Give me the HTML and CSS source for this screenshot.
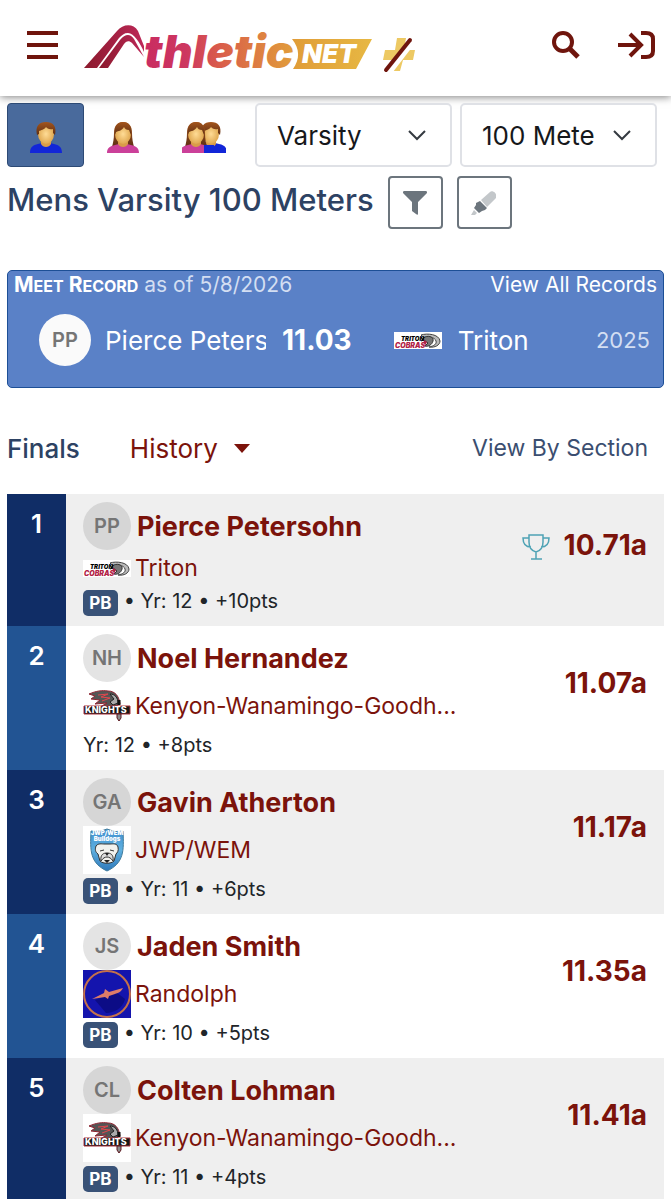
FILE: index.html
```html
<!DOCTYPE html>
<html lang="en">
<head>
    <meta charset="utf-8">
    <meta name="viewport" content="width=device-width, initial-scale=1">
    <title>Mens Varsity 100 Meters</title>
    <link rel="stylesheet" href="styles.css">
</head>
<body>
<svg class="defs" aria-hidden="true">
    <defs>
        <linearGradient id="shield" x1="0" y1="0" x2="0" y2="1"><stop offset="0" stop-color="#3f8fce"/><stop offset=".5" stop-color="#5fb0e0"/><stop offset="1" stop-color="#2f78ba"/></linearGradient>
        <linearGradient id="hair" x1="0" y1="0" x2="0" y2="1"><stop offset="0" stop-color="#a4551c"/><stop offset="1" stop-color="#5e2f14"/></linearGradient>
        <radialGradient id="skin"><stop offset="0" stop-color="#ffdc96"/><stop offset="1" stop-color="#e0a850"/></radialGradient>
    </defs>
    <symbol id="man" viewBox="0 0 34 32">
        <path d="M1 32c0-6 3-8 8-9l4-1h8l4 1c5 1 8 3 8 9z" fill="#1226d8"/>
        <path d="M12 19h10v4c-2 4-8 4-10 0z" fill="#d99c48"/>
        <ellipse cx="17" cy="13" rx="8" ry="10" fill="url(#skin)"/>
        <path d="M8 14C6 5 10 1 17 1s11 4 9 13l-2-2V8c-4 1-6-1-7-2-2 3-5 3-7 4v3z" fill="url(#hair)"/>
    </symbol>
    <symbol id="woman" viewBox="0 0 34 32">
        <path d="M6 26C7 22 8 18 8 12 8 5 11 1 17 1s9 4 9 11c0 6 1 10 2 14z" fill="url(#hair)"/>
        <path d="M1 32c0-5 3-7 8-8l4-1h8l4 1c5 1 8 3 8 8z" fill="#cb4099"/>
        <path d="M12 18h10v5c-2 4-8 4-10 0z" fill="#d99c48"/>
        <ellipse cx="17" cy="13" rx="8" ry="10" fill="url(#skin)"/>
        <path d="M9 14C8 6 11 1 17 1s9 4 8 13l-2-5c-3 0-4-1-5-3-2 4-6 4-8 5z" fill="url(#hair)"/>
    </symbol>
    <symbol id="cobras" viewBox="0 0 48 17">
        <path d="M0 0h48v17H0z" fill="#fff"/>
        <path d="M27 3c6-2 18-1 19 6 0 4-5 7-11 6 5-1 8-3 7-6-1-4-8-5-12-3z" fill="#bbb" stroke="#444"/>
        <path d="M31 5c5-2 9 1 8 4-1 4-5 6-8 5l3-3-4-3-3 1z" fill="#777" stroke="#333"/>
        <path d="M29 7l4 3-2 4z" fill="#b22246"/>
        <text x="7" y="9" class="cobras-top">TRITON</text>
        <text x="1" y="16" class="cobras-name">COBRAS</text>
    </symbol>
    <symbol id="knights" viewBox="0 0 48 48">
        <path d="M0 0h48v48H0z" fill="#fff"/>
        <path d="M6 12c7-3 13-4 19-3 7 0 11 5 12 13l-6 3H17l7-4-12 1 5-4-9-1 4-3z" fill="#555" stroke="#8e2330"/>
        <path d="M15 13l10-1-7 3 9 1-8 3" fill="none" stroke="#e2474d"/>
        <path d="M27 12c5 0 8 4 8 9l-5 2-3-3 4-3z" fill="#aaa" stroke="#222"/>
        <path d="M1 24h46v8H1z" fill="#171717" stroke="#a8313a"/>
        <text x="2" y="31" class="knights-name">KNIGHTS</text>
        <path d="M36 18v5" stroke="#111" stroke-width="3"/>
        <path d="M34 32h4v4l-2 3-2-3z" fill="#8b8b8b" stroke="#5b171e"/>
    </symbol>
    <symbol id="bulldogs" viewBox="0 0 48 48">
        <path d="M0 0h48v48H0z" fill="#fff"/>
        <path d="M8 5c6 1 11 0 16-2 5 2 10 3 16 2 1 20 1 32-16 40C7 37 7 25 8 5z" fill="url(#shield)" stroke="#417c9d"/>
        <text x="24" y="9" class="bulldogs-name">JWP/WEM</text>
        <text x="24" y="15" class="bulldogs-name">Bulldogs</text>
        <path d="M13 20c2-3 6-2 8-2h6c3 0 7-1 8 3 1 4-1 6-2 7l-2 7c-3 3-11 3-14 0l-2-7c-3-2-3-5-2-8z" fill="#f2f2ee" stroke="#333"/>
        <path d="M17 25l4-1m6 0l4 1M18 35c-1-7 3-8 6-8s7 1 6 8c-2-3-4-4-6-4s-4 1-6 4z" fill="#ddd" stroke="#333"/>
        <path d="M22 27h4l-2 3zM21 34h6l-3 3z" fill="#222"/>
    </symbol>
    <symbol id="rockets" viewBox="0 0 48 48">
        <path d="M0 0h48v48H0z" fill="#1414ad"/>
        <path d="M12 30l11 13c8 0 17-5 19-14l-9-7z" fill="#0c0c86"/>
        <circle cx="24" cy="24" r="23" fill="none" stroke="#c4714a" stroke-width="2"/>
        <path d="M9 29l12-6 1-4 4 3 7-2 7-2c-2 4-5 5-8 6l-6 2-1 3-3-2z" fill="#dd7c68"/>
    </symbol>
</svg>

<header class="topbar">
    <button class="icon-btn menu" aria-label="Menu">
        <svg width="33" height="28" viewBox="0 0 33 28"><path d="M1 2h31M1 14h31M1 26h31" stroke="#6f150d" stroke-width="4"/></svg>
    </button>
    <a class="brand" href="#" aria-label="AthleticNET home">
        <svg width="292" height="52" viewBox="0 0 292 52">
            <defs>
                <linearGradient id="peak" x1="0" y1="0" x2="1" y2="0"><stop offset="0" stop-color="#8b1a2d"/><stop offset="1" stop-color="#bd2858"/></linearGradient>
                <linearGradient id="word" gradientUnits="userSpaceOnUse" x1="62" y1="0" x2="208" y2="0"><stop offset="0" stop-color="#c92c61"/><stop offset=".28" stop-color="#cd3760"/><stop offset=".5" stop-color="#d95b4b"/><stop offset="1" stop-color="#e19b3b"/></linearGradient>
                <linearGradient id="tag" x1="0" y1="0" x2="1" y2="0"><stop offset="0" stop-color="#e09c38"/><stop offset="1" stop-color="#e7b843"/></linearGradient>
            </defs>
            <path d="M1 49 34 12c6-7 16-8 21 0l6 15v6C57 24 51 14 45 14c-4 0-6 2-9 5L14 49z" fill="url(#peak)"/>
            <path d="M16 49 37 21c5-6 10-7 14-1l10 18-12-14c-3-3-6-2-8 1L25 49z" fill="url(#peak)"/>
            <text x="61" y="49" class="brand-word" fill="url(#word)">thletic</text>
            <path d="M209 20h80l-16 30h-63c7-10 7-20-1-30z" fill="url(#tag)"/>
            <text x="219" y="44" class="brand-net">NET</text>
        </svg>
    </a>
    <a class="plus" href="#" aria-label="Athletic plus">
        <svg width="34" height="36" viewBox="0 0 34 36"><path d="M15 1h9l-2 12h11l-2 10H21l-3 11H9l3-11H1l2-10h10z" fill="#edc963"/><path d="m8 34 20-26" stroke="#fff" stroke-width="6"/><path d="M4 33 28 3" stroke="#6f150d" stroke-width="4" stroke-linecap="round"/></svg>
    </a>
    <button class="icon-btn search" aria-label="Search">
        <svg width="28" height="28" viewBox="0 0 28 28" fill="none" stroke="#6f150d"><circle cx="11" cy="11" r="9" stroke-width="4"/><path d="m18 18 8 8" stroke-width="5"/></svg>
    </button>
    <button class="icon-btn" aria-label="Log in">
        <svg width="38" height="28" viewBox="0 0 38 28" fill="none" stroke="#6f150d" stroke-width="4"><path d="M1 14h23M13 3l11 11-11 11M24 2h5c5 0 7 2 7 6v12c0 4-2 6-7 6h-5"/></svg>
    </button>
</header>

<main class="page">
    <div class="filters">
        <div class="genders">
            <button class="gender active" aria-label="Mens"><svg width="34" height="32"><use href="#man"/></svg></button>
            <button class="gender" aria-label="Womens"><svg width="34" height="32"><use href="#woman"/></svg></button>
            <button class="gender both" aria-label="Combined">
                <svg width="44" height="32" viewBox="0 0 44 32"><use href="#man" x="12" width="34" height="32"/><use href="#woman" x="-3" width="34" height="32"/><path d="M22 24h10v8H22z" fill="#1226d8"/></svg>
            </button>
        </div>
        <div class="picker">
            <select aria-label="Division"><option>Varsity</option></select>
            <svg width="18" height="12" viewBox="0 0 18 12"><path d="m1 2 8 8 8-8"/></svg>
        </div>
        <div class="picker">
            <select aria-label="Event"><option>100 Meters</option></select>
            <svg width="18" height="12" viewBox="0 0 18 12"><path d="m1 2 8 8 8-8"/></svg>
        </div>
    </div>

    <div class="title-row">
        <h1>Mens Varsity 100 Meters</h1>
        <button class="tool" aria-label="Filter"><svg width="24" height="24" viewBox="0 0 24 24"><path d="M1 0h22c1 0 1 1 1 2l-9 9v12c0 1-1 1-2 0l-4-3v-9L0 2C0 1 0 0 1 0z" fill="#6c757d"/></svg></button>
        <button class="tool" aria-label="Highlight"><svg width="26" height="26" viewBox="0 0 26 26"><path d="m10 10 9-8c2-2 7 1 6 4v2l-9 9z" fill="#c3c7ca"/><path d="m9 11 7 7-2 2-3 1-3 2-5-5 2-3v-2z" fill="#6c757d"/><path d="m3 20 3 3-2 2H0z" fill="#c3c7ca"/></svg></button>
    </div>

    <section class="record">
        <div class="record-head">
            <div><b>M<small>EET</small> R<small>ECORD</small></b> <span>as of 5/8/2026</span></div>
            <a href="#">View All Records</a>
        </div>
        <div class="record-row">
            <span class="avatar">PP</span>
            <a class="record-name" href="#">Pierce Petersohn</a>
            <a class="record-mark" href="#">11.03</a>
            <svg width="48" height="17"><use href="#cobras"/></svg>
            <a href="#">Triton</a>
            <span class="record-year">2025</span>
        </div>
    </section>

    <div class="round">
        <h2>Finals</h2>
        <button class="history">History <svg width="16" height="9" viewBox="0 0 16 9"><path d="M0 0h16L8 9z" fill="#7b130b"/></svg></button>
        <a href="#">View By Section</a>
    </div>

    <table class="results">
        <tbody>
        <tr>
            <th scope="row">1</th>
            <td class="athlete">
                <div class="who"><span class="avatar">PP</span><a href="#">Pierce Petersohn</a></div>
                <div class="team"><svg width="48" height="17"><use href="#cobras"/></svg><a href="#">Triton</a></div>
                <div class="meta"><span class="pb">PB</span> • Yr: 12 • +10pts</div>
            </td>
            <td class="mark"><svg width="28" height="26" viewBox="0 0 28 26" fill="none" stroke="#4fa3b5" stroke-width="1.5"><path d="M7 1h14v7c0 6-3 9-7 10-4-1-7-4-7-10zM7 4H1c0 6 3 9 8 9M21 4h6c0 6-3 9-8 9M14 18v7M9 25h11"/></svg><a href="#">10.71a</a></td>
        </tr>
        <tr>
            <th scope="row">2</th>
            <td class="athlete">
                <div class="who"><span class="avatar">NH</span><a href="#">Noel Hernandez</a></div>
                <div class="team"><svg width="48" height="48"><use href="#knights"/></svg><a href="#">Kenyon-Wanamingo-Goodh...</a></div>
                <div class="meta">Yr: 12 • +8pts</div>
            </td>
            <td class="mark"><a href="#">11.07a</a></td>
        </tr>
        <tr>
            <th scope="row">3</th>
            <td class="athlete">
                <div class="who"><span class="avatar">GA</span><a href="#">Gavin Atherton</a></div>
                <div class="team"><svg width="48" height="48"><use href="#bulldogs"/></svg><a href="#">JWP/WEM</a></div>
                <div class="meta"><span class="pb">PB</span> • Yr: 11 • +6pts</div>
            </td>
            <td class="mark"><a href="#">11.17a</a></td>
        </tr>
        <tr>
            <th scope="row">4</th>
            <td class="athlete">
                <div class="who"><span class="avatar">JS</span><a href="#">Jaden Smith</a></div>
                <div class="team"><svg width="48" height="48"><use href="#rockets"/></svg><a href="#">Randolph</a></div>
                <div class="meta"><span class="pb">PB</span> • Yr: 10 • +5pts</div>
            </td>
            <td class="mark"><a href="#">11.35a</a></td>
        </tr>
        <tr>
            <th scope="row">5</th>
            <td class="athlete">
                <div class="who"><span class="avatar">CL</span><a href="#">Colten Lohman</a></div>
                <div class="team"><svg width="48" height="48"><use href="#knights"/></svg><a href="#">Kenyon-Wanamingo-Goodh...</a></div>
                <div class="meta"><span class="pb">PB</span> • Yr: 11 • +4pts</div>
            </td>
            <td class="mark"><a href="#">11.41a</a></td>
        </tr>
        </tbody>
    </table>
</main>
</body>
</html>
```
FILE: styles.css
```css
* { box-sizing: border-box; }
body { margin: 0; background: #fff; color: #212529; font-family: Inter, "Liberation Sans", sans-serif; font-size: 26px; }
a { color: #7b130b; text-decoration: none; }
button { border: 0; background: none; padding: 0; font: inherit; color: inherit; cursor: pointer; }
svg { display: block; flex: none; }
h1, h2 { margin: 0; font-weight: 500; color: #2d4263; }
.defs { position: absolute; width: 0; height: 0; visibility: hidden; }

/* top bar */
.topbar { display: flex; align-items: center; height: 96px; padding: 0 16px 6px 26px; box-shadow: 0 1px 8px rgba(0, 0, 0, .5); }
.menu { margin-right: 24px; }
.plus { margin: 20px 0 0 7px; }
.search { margin: 0 37px 0 auto; }
.brand-word { font-size: 46px; font-weight: 900; font-style: italic; }
.brand-net { font-size: 26px; font-weight: 900; font-style: italic; fill: #fff; }

.page { padding: 7px 7px 0; }

/* gender, division and event */
.filters { display: flex; gap: 8px; padding-right: 7px; }
.genders { display: flex; }
.gender { display: flex; align-items: center; justify-content: center; width: 77px; height: 64px; padding-top: 4px; border-radius: 4px; }
.gender.active { background: #496a9c; border: 1px solid #2d4a75; }
.gender.both { width: 86px; }
.picker { display: grid; flex: 1; min-width: 0; align-items: center; }
.picker select { grid-area: 1 / 1; width: 100%; height: 64px; padding: 0 60px 0 20px; border: 2px solid #dfe1e6; border-radius: 5px; background: #fff; color: #16181b; font: inherit; appearance: none; }
.picker svg { grid-area: 1 / 1; justify-self: end; margin-right: 26px; pointer-events: none; fill: none; stroke: #343a40; stroke-width: 2; }

.title-row { display: flex; gap: 14px; margin-top: 9px; }
.title-row h1 { font-size: 31px; line-height: 48px; white-space: nowrap; }
.tool { display: flex; align-items: center; justify-content: center; width: 55px; height: 53px; border: 2px solid #6c757d; border-radius: 4px; }

/* meet record */
.record { height: 118px; margin-top: 41px; padding: 0 6px; border: 1px solid #1d4f96; border-radius: 5px; background: #5a81c7; color: #fff; }
.record a { color: #fff; }
.record-head { display: flex; justify-content: space-between; font-size: 21px; line-height: 28px; }
.record-head small { font-size: 16px; }
.record-head span, .record-year { color: #d3def2; }
.record-row { display: flex; align-items: center; gap: 16px; padding: 14px 7px 0 25px; }
.record-row svg { margin-left: 26px; }
.record-name { width: 161px; overflow: hidden; white-space: nowrap; }
.record .record-mark { font-size: 28px; font-weight: 700; line-height: 32px; }
.record-year { margin-left: auto; font-size: 22px; }

.avatar { display: flex; align-items: center; justify-content: center; flex: none; width: 48px; height: 48px; border-radius: 50%; background: #d6d6d6; color: #757575; font-size: 20px; font-weight: 600; }
.record .avatar { width: 52px; height: 52px; margin-right: -2px; background: #fafafa; }

.round { display: flex; align-items: center; height: 52px; margin: 34px 0 20px; padding-right: 16px; }
.round h2 { font-size: 26px; }
.round a { margin-left: auto; color: #3b4e70; font-size: 23px; }
.history { display: flex; align-items: center; gap: 16px; margin-left: 50px; color: #7b130b; }

/* results */
.results { width: 100%; border-collapse: collapse; }
.results th { width: 59px; padding: 14px 0 0; vertical-align: top; background: #225493; color: #fff; font-weight: 600; line-height: 32px; }
.results td { padding: 0; }
.results tr:nth-child(odd) { background: #efefef; }
.results tr:nth-child(odd) th { background: #102d66; }
.results tr:nth-child(even) .avatar { background: #e4e4e4; }
.results .athlete { padding: 8px 0 0 17px; }
.who { display: flex; align-items: center; gap: 6px; font-size: 27px; font-weight: 700; }
.team { display: flex; align-items: center; gap: 4px; min-height: 36px; font-size: 23px; white-space: nowrap; }
.meta { height: 40px; font-size: 20px; line-height: 30px; white-space: nowrap; }
.pb { display: inline-block; width: 35px; border-radius: 5px; background: #395277; color: #fff; font-size: 17px; font-weight: 700; line-height: 26px; text-align: center; vertical-align: middle; }
.results .mark { padding: 0 17px 30px 0; font-size: 28px; text-align: right; font-weight: 700; white-space: nowrap; }
.mark svg { display: inline-block; margin-right: 14px; vertical-align: middle; }

/* lettering inside the team logos */
.cobras-top { font-size: 6px; font-weight: 900; font-style: italic; }
.cobras-name { font-size: 7px; font-weight: 900; font-style: italic; fill: #b22246; }
.knights-name { font-size: 9px; font-weight: 800; fill: #fff; }
.bulldogs-name { font-size: 6px; font-weight: 900; fill: #fff; text-anchor: middle; }
```
